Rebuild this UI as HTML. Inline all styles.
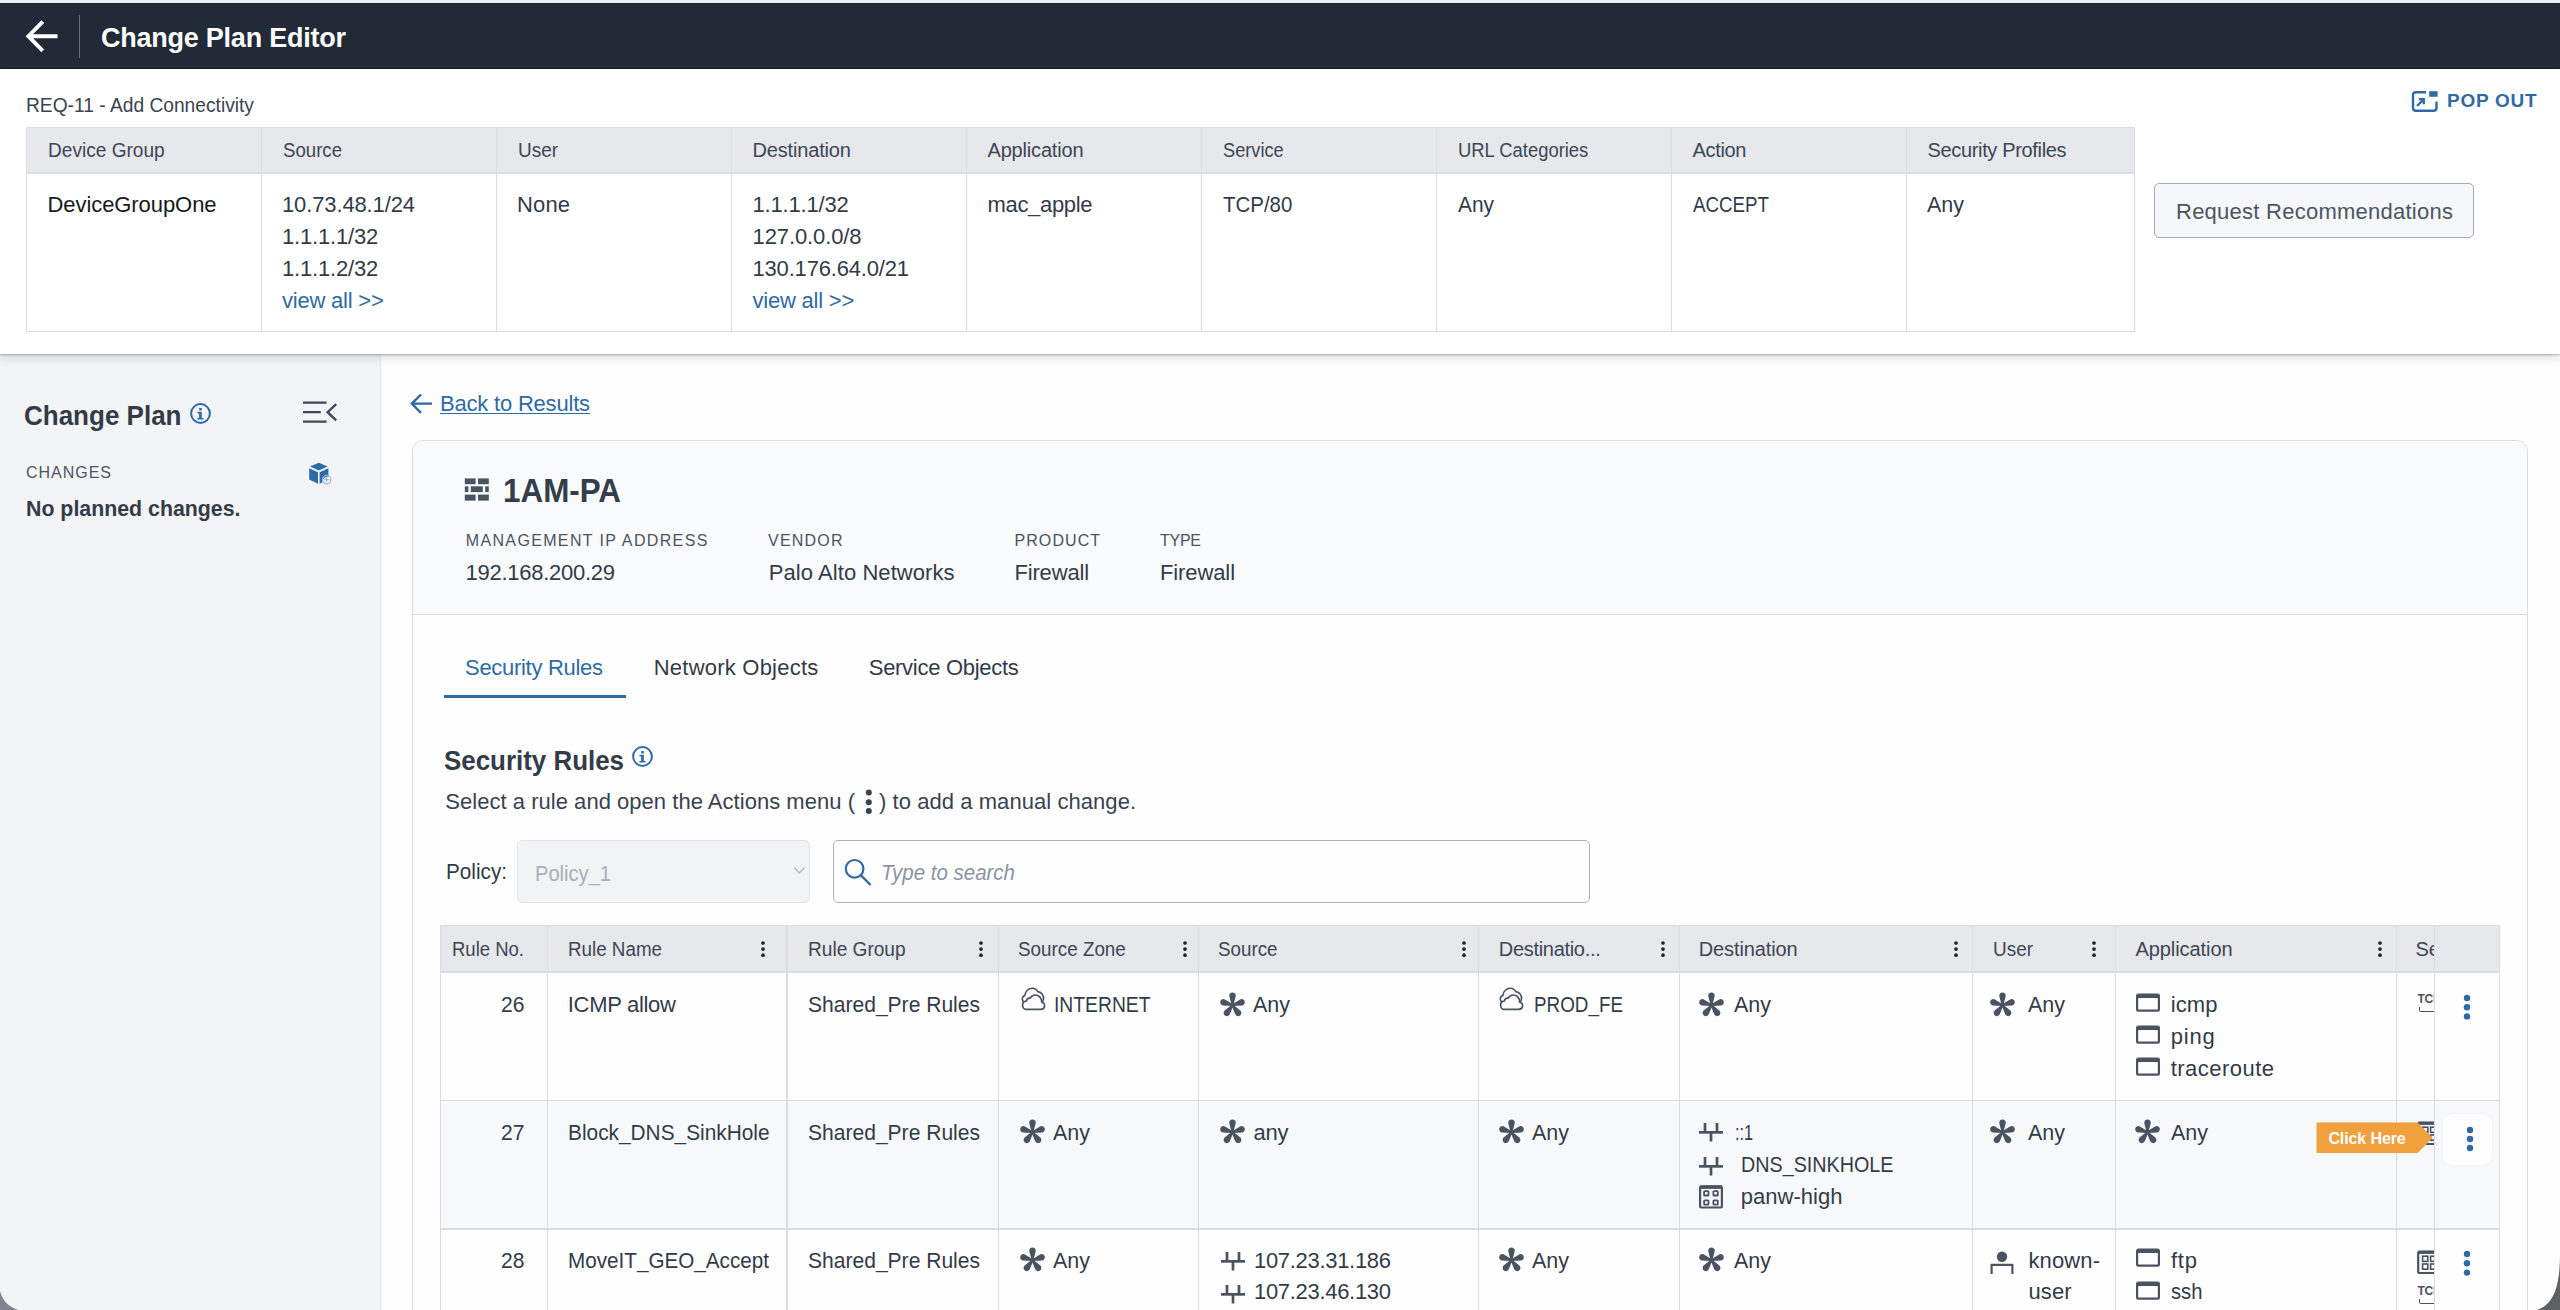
<!DOCTYPE html>
<html><head><meta charset="utf-8"><title>Change Plan Editor</title>
<style>
html,body{margin:0;padding:0;}
body{width:2560px;height:1310px;position:relative;overflow:hidden;background:#fefefe;font-family:"Liberation Sans", sans-serif;}
.t{position:absolute;white-space:nowrap;font-family:"Liberation Sans", sans-serif;}
svg{overflow:visible;}
</style></head><body>
<div style="position:absolute;left:0px;top:0px;width:2560px;height:3px;background:#eef1f6;"></div>
<div style="position:absolute;left:0px;top:3px;width:2560px;height:66px;background:#222937;"></div>
<div style="position:absolute;left:0px;top:3px;width:2560px;height:1px;background:#1b2230;"></div>
<div style="position:absolute;left:0px;top:68px;width:2560px;height:1px;background:#161c26;"></div>
<svg style="position:absolute;left:25px;top:18.5px;" width="36" height="36" viewBox="0 0 36 36"><path d="M17.8 2.6 L3.4 17.2 L17.8 31.8 M3.4 17.2 H32.5" fill="none" stroke="#fff" stroke-width="3.9" stroke-linecap="butt" stroke-linejoin="miter"/></svg>
<div style="position:absolute;left:78.5px;top:14.5px;width:1.5px;height:43px;background:#6a707c;"></div>
<div style="position:absolute;left:0px;top:69px;width:2560px;height:285px;background:#ffffff;box-shadow:0 1px 2px rgba(40,48,60,0.30), 0 4px 9px rgba(40,48,60,0.16);z-index:0;"></div>
<svg style="position:absolute;left:2411px;top:90px;" width="28" height="23" viewBox="0 0 28 23"><path d="M15 2.2 H5 Q2 2.2 2 5.2 V17.8 Q2 20.8 5 20.8 H22.5 Q25.5 20.8 25.5 17.8 V11.5" fill="none" stroke="#2e6aa5" stroke-width="2.4"/>
<rect x="18.2" y="1.2" width="8.4" height="5.6" fill="#2e6aa5"/>
<path d="M6 16 L12.6 9.4 M7.8 9.2 H12.8 V14.2" fill="none" stroke="#2e6aa5" stroke-width="2.3"/></svg>
<div style="position:absolute;left:26px;top:127px;width:2109px;height:46px;background:#e6e8ec;"></div>
<div style="position:absolute;left:26px;top:127px;width:2109px;height:205px;border:1px solid #d9dce2;box-sizing:border-box;"></div>
<div style="position:absolute;left:26px;top:172px;width:2109px;height:1.5px;background:#d9dce2;"></div>
<div style="position:absolute;left:261px;top:127px;width:1px;height:205px;background:#d9dce2;"></div>
<div style="position:absolute;left:496px;top:127px;width:1px;height:205px;background:#d9dce2;"></div>
<div style="position:absolute;left:731px;top:127px;width:1px;height:205px;background:#d9dce2;"></div>
<div style="position:absolute;left:966px;top:127px;width:1px;height:205px;background:#d9dce2;"></div>
<div style="position:absolute;left:1201px;top:127px;width:1px;height:205px;background:#d9dce2;"></div>
<div style="position:absolute;left:1436px;top:127px;width:1px;height:205px;background:#d9dce2;"></div>
<div style="position:absolute;left:1671px;top:127px;width:1px;height:205px;background:#d9dce2;"></div>
<div style="position:absolute;left:1906px;top:127px;width:1px;height:205px;background:#d9dce2;"></div>
<div style="position:absolute;left:2154px;top:183px;width:320px;height:55px;background:#f6f7f9;border:1.5px solid #a3abb7;border-radius:5px;box-sizing:border-box;"></div>
<div style="position:absolute;left:0px;top:352px;width:380px;height:958px;background:#f3f4f6;z-index:-1;"></div>
<div style="position:absolute;left:379.5px;top:352px;width:1px;height:958px;background:#e5e7eb;z-index:-1;"></div>
<svg style="position:absolute;left:190px;top:403px;" width="21" height="21" viewBox="0 0 21 21"><circle cx="10.5" cy="10.5" r="9.4" fill="none" stroke="#2e6aa5" stroke-width="2"/>
<rect x="9.2" y="5.04" width="2.6" height="2.4" fill="#2e6aa5"/>
<path d="M7.5 8.82 H11.8 V14.91 H13.5 V16.59 H7.3 V14.91 H9.1 V10.5 H7.5 Z" fill="#2e6aa5"/></svg>
<svg style="position:absolute;left:302px;top:400px;" width="36" height="24" viewBox="0 0 36 24"><path d="M1 2.6 H24.6 M1 12.2 H18.8 M1 21.7 H24.6" stroke="#3f4856" stroke-width="2.2" fill="none"/>
<path d="M34.2 4.2 L25.6 12.2 L34.2 20.4" stroke="#3f4856" stroke-width="2.4" fill="none"/></svg>
<svg style="position:absolute;left:308px;top:462px;" width="24" height="24" viewBox="0 0 24 24"><path d="M10.8 0.8 L19.6 4.6 L10.8 8.6 L2 4.6 Z" fill="#2e6aa5"/>
<path d="M1.2 6.2 L10 10.2 V21.8 L1.2 17.6 Z" fill="#2e6aa5"/>
<path d="M11.6 10.2 L20.4 6.2 V14.5 A6 6 0 0 0 14.2 20.6 L11.6 21.8 Z" fill="#2e6aa5"/>
<circle cx="18.6" cy="17.6" r="4.2" fill="none" stroke="#8fb3d6" stroke-width="1.2"/>
<path d="M18.6 15.4 V19.8 M16.4 17.6 H20.8" stroke="#8fb3d6" stroke-width="1"/></svg>
<svg style="position:absolute;left:410px;top:393px;" width="24" height="22" viewBox="0 0 24 22"><path d="M11 1.5 L1.8 10.6 L11 19.8 M1.8 10.6 H22" fill="none" stroke="#2e6aa5" stroke-width="2.4"/></svg>
<div style="position:absolute;left:440px;top:412.5px;width:150px;height:1.6px;background:#2e6aa5;"></div>
<div style="position:absolute;left:411.5px;top:440px;width:2116.5px;height:900px;border:1.5px solid #d9dde3;border-radius:11px;background:#fefefe;box-sizing:border-box;"></div>
<div style="position:absolute;left:413px;top:441.5px;width:2113.5px;height:172.5px;background:#f9fafb;border-radius:10px 10px 0 0;"></div>
<div style="position:absolute;left:413px;top:613.5px;width:2113.5px;height:1.5px;background:#d9dde3;"></div>
<svg style="position:absolute;left:464px;top:478px;" width="26" height="24" viewBox="0 0 26 24"><g fill="#4a5361">
<rect x="0.8" y="0.4" width="10.8" height="5.8"/><rect x="14" y="0.4" width="10.8" height="5.8"/>
<rect x="0.8" y="8.3" width="3.6" height="5.8"/><rect x="6.8" y="8.3" width="12" height="5.8"/><rect x="21.2" y="8.3" width="3.6" height="5.8"/>
<rect x="0.8" y="16.6" width="10.8" height="6"/><rect x="14" y="16.6" width="10.8" height="6"/></g></svg>
<div style="position:absolute;left:443.5px;top:694.5px;width:182.5px;height:3.2px;background:#2e6aa5;"></div>
<svg style="position:absolute;left:632px;top:745.5px;" width="21" height="21" viewBox="0 0 21 21"><circle cx="10.5" cy="10.5" r="9.4" fill="none" stroke="#2e6aa5" stroke-width="2"/>
<rect x="9.2" y="5.04" width="2.6" height="2.4" fill="#2e6aa5"/>
<path d="M7.5 8.82 H11.8 V14.91 H13.5 V16.59 H7.3 V14.91 H9.1 V10.5 H7.5 Z" fill="#2e6aa5"/></svg>
<svg style="position:absolute;left:862px;top:787px;" width="14" height="28" viewBox="0 0 14 28"><circle cx="6.8" cy="5.6" r="3" fill="#394250"/><circle cx="6.8" cy="15.3" r="3" fill="#394250"/><circle cx="6.8" cy="23.9" r="3" fill="#394250"/></svg>
<div style="position:absolute;left:517px;top:840px;width:293px;height:63px;background:#f2f3f5;border:1px solid #e2e5e9;border-radius:5px;box-sizing:border-box;"></div>
<svg style="position:absolute;left:793px;top:866px;" width="13" height="9" viewBox="0 0 13 9"><path d="M1.2 1.6 L6.4 7 L11.6 1.6" fill="none" stroke="#b3b9c2" stroke-width="1.4"/></svg>
<div style="position:absolute;left:832.5px;top:839.5px;width:757.5px;height:63.5px;background:#fefefe;border:1.6px solid #a9b3c0;border-radius:5px;box-sizing:border-box;"></div>
<svg style="position:absolute;left:843px;top:857px;" width="30" height="30" viewBox="0 0 30 30"><circle cx="11.6" cy="11.8" r="8.8" fill="none" stroke="#2e6aa5" stroke-width="2.2"/><path d="M18 18.4 L27.6 28" stroke="#2e6aa5" stroke-width="2.3"/></svg>
<div style="position:absolute;left:440px;top:925px;width:2059.5px;height:47px;background:#e6e8ec;"></div>
<div style="position:absolute;left:440px;top:1100px;width:2059.5px;height:128.5px;background:#f7f8fa;"></div>
<div style="position:absolute;left:440px;top:925px;width:1px;height:400px;background:#d9dce2;"></div>
<div style="position:absolute;left:2498.5px;top:925px;width:1px;height:400px;background:#d9dce2;"></div>
<div style="position:absolute;left:440px;top:925px;width:2059.5px;height:1px;background:#d9dce2;"></div>
<div style="position:absolute;left:440px;top:971px;width:2059.5px;height:1.5px;background:#d9dce2;"></div>
<div style="position:absolute;left:440px;top:1099.5px;width:2059.5px;height:1.5px;background:#d9dce2;"></div>
<div style="position:absolute;left:440px;top:1228px;width:2059.5px;height:1.5px;background:#d9dce2;"></div>
<div style="position:absolute;left:547px;top:925px;width:1px;height:400px;background:#d9dce2;"></div>
<div style="position:absolute;left:786px;top:925px;width:2px;height:400px;background:#d9dce2;"></div>
<div style="position:absolute;left:997.5px;top:925px;width:1px;height:400px;background:#d9dce2;"></div>
<div style="position:absolute;left:1197.5px;top:925px;width:1px;height:400px;background:#d9dce2;"></div>
<div style="position:absolute;left:1477.5px;top:925px;width:1px;height:400px;background:#d9dce2;"></div>
<div style="position:absolute;left:1678.5px;top:925px;width:1px;height:400px;background:#d9dce2;"></div>
<div style="position:absolute;left:1972px;top:925px;width:1px;height:400px;background:#d9dce2;"></div>
<div style="position:absolute;left:2115px;top:925px;width:1px;height:400px;background:#d9dce2;"></div>
<div style="position:absolute;left:2395.5px;top:925px;width:1px;height:400px;background:#d9dce2;"></div>
<div style="position:absolute;left:2434px;top:925px;width:1px;height:400px;background:#d9dce2;"></div>
<svg style="position:absolute;left:756.8px;top:936.6999999999999px;" width="12" height="24.2" viewBox="0 0 12 24.2"><circle cx="6" cy="6.0" r="1.85" fill="#1f242c"/><circle cx="6" cy="12.1" r="1.85" fill="#1f242c"/><circle cx="6" cy="18.2" r="1.85" fill="#1f242c"/></svg>
<svg style="position:absolute;left:975px;top:936.6999999999999px;" width="12" height="24.2" viewBox="0 0 12 24.2"><circle cx="6" cy="6.0" r="1.85" fill="#1f242c"/><circle cx="6" cy="12.1" r="1.85" fill="#1f242c"/><circle cx="6" cy="18.2" r="1.85" fill="#1f242c"/></svg>
<svg style="position:absolute;left:1179px;top:936.6999999999999px;" width="12" height="24.2" viewBox="0 0 12 24.2"><circle cx="6" cy="6.0" r="1.85" fill="#1f242c"/><circle cx="6" cy="12.1" r="1.85" fill="#1f242c"/><circle cx="6" cy="18.2" r="1.85" fill="#1f242c"/></svg>
<svg style="position:absolute;left:1457.75px;top:936.6999999999999px;" width="12" height="24.2" viewBox="0 0 12 24.2"><circle cx="6" cy="6.0" r="1.85" fill="#1f242c"/><circle cx="6" cy="12.1" r="1.85" fill="#1f242c"/><circle cx="6" cy="18.2" r="1.85" fill="#1f242c"/></svg>
<svg style="position:absolute;left:1656.8px;top:936.6999999999999px;" width="12" height="24.2" viewBox="0 0 12 24.2"><circle cx="6" cy="6.0" r="1.85" fill="#1f242c"/><circle cx="6" cy="12.1" r="1.85" fill="#1f242c"/><circle cx="6" cy="18.2" r="1.85" fill="#1f242c"/></svg>
<svg style="position:absolute;left:1949.5px;top:936.6999999999999px;" width="12" height="24.2" viewBox="0 0 12 24.2"><circle cx="6" cy="6.0" r="1.85" fill="#1f242c"/><circle cx="6" cy="12.1" r="1.85" fill="#1f242c"/><circle cx="6" cy="18.2" r="1.85" fill="#1f242c"/></svg>
<svg style="position:absolute;left:2088px;top:936.6999999999999px;" width="12" height="24.2" viewBox="0 0 12 24.2"><circle cx="6" cy="6.0" r="1.85" fill="#1f242c"/><circle cx="6" cy="12.1" r="1.85" fill="#1f242c"/><circle cx="6" cy="18.2" r="1.85" fill="#1f242c"/></svg>
<svg style="position:absolute;left:2374px;top:936.6999999999999px;" width="12" height="24.2" viewBox="0 0 12 24.2"><circle cx="6" cy="6.0" r="1.85" fill="#1f242c"/><circle cx="6" cy="12.1" r="1.85" fill="#1f242c"/><circle cx="6" cy="18.2" r="1.85" fill="#1f242c"/></svg>
<svg style="position:absolute;left:1020.5px;top:987.2px;" width="26" height="25" viewBox="0 0 26 25"><g fill="none" stroke="#4a5361" stroke-width="1.65" stroke-linejoin="round" stroke-linecap="round">
<path d="M2.3 14.6 C0.4 12.6 1.2 9.2 3.9 8.4 C4.2 4.2 7.6 1.2 11.2 1.2 C13.8 1.2 15.8 2.6 16.9 4.6 C20.6 5.2 23.2 8.6 22.4 12.6 C22.2 13.2 22 13.8 21.6 14.3"/>
<path d="M4.4 22.3 H19.8 C24.4 22.3 25 16.2 20.6 15.1 C20.8 10.6 17.6 8 14.4 8 C11.8 8 10 9.4 9.2 11.2 C7.4 11 5.8 12.2 5.4 14 C2.2 14.4 1.4 16.8 1.6 18.6 C1.8 20.6 3.2 22.3 4.4 22.3 Z"/></g></svg>
<svg style="position:absolute;left:1020px;top:1119px;" width="25" height="25" viewBox="0 0 25 25"><path transform="rotate(0 12.5 13.2)" d="M11.6 13.2 L9.3 4.2 A3.25 3.25 0 1 1 15.7 4.2 L13.4 13.2 Z" fill="#4a5361"/><path transform="rotate(72 12.5 13.2)" d="M11.6 13.2 L9.3 4.2 A3.25 3.25 0 1 1 15.7 4.2 L13.4 13.2 Z" fill="#4a5361"/><path transform="rotate(144 12.5 13.2)" d="M11.6 13.2 L9.3 4.2 A3.25 3.25 0 1 1 15.7 4.2 L13.4 13.2 Z" fill="#4a5361"/><path transform="rotate(216 12.5 13.2)" d="M11.6 13.2 L9.3 4.2 A3.25 3.25 0 1 1 15.7 4.2 L13.4 13.2 Z" fill="#4a5361"/><path transform="rotate(288 12.5 13.2)" d="M11.6 13.2 L9.3 4.2 A3.25 3.25 0 1 1 15.7 4.2 L13.4 13.2 Z" fill="#4a5361"/><circle cx="12.5" cy="13.2" r="2.2" fill="#4a5361"/></svg>
<svg style="position:absolute;left:1020px;top:1247px;" width="25" height="25" viewBox="0 0 25 25"><path transform="rotate(0 12.5 13.2)" d="M11.6 13.2 L9.3 4.2 A3.25 3.25 0 1 1 15.7 4.2 L13.4 13.2 Z" fill="#4a5361"/><path transform="rotate(72 12.5 13.2)" d="M11.6 13.2 L9.3 4.2 A3.25 3.25 0 1 1 15.7 4.2 L13.4 13.2 Z" fill="#4a5361"/><path transform="rotate(144 12.5 13.2)" d="M11.6 13.2 L9.3 4.2 A3.25 3.25 0 1 1 15.7 4.2 L13.4 13.2 Z" fill="#4a5361"/><path transform="rotate(216 12.5 13.2)" d="M11.6 13.2 L9.3 4.2 A3.25 3.25 0 1 1 15.7 4.2 L13.4 13.2 Z" fill="#4a5361"/><path transform="rotate(288 12.5 13.2)" d="M11.6 13.2 L9.3 4.2 A3.25 3.25 0 1 1 15.7 4.2 L13.4 13.2 Z" fill="#4a5361"/><circle cx="12.5" cy="13.2" r="2.2" fill="#4a5361"/></svg>
<svg style="position:absolute;left:1220px;top:991.5px;" width="25" height="25" viewBox="0 0 25 25"><path transform="rotate(0 12.5 13.2)" d="M11.6 13.2 L9.3 4.2 A3.25 3.25 0 1 1 15.7 4.2 L13.4 13.2 Z" fill="#4a5361"/><path transform="rotate(72 12.5 13.2)" d="M11.6 13.2 L9.3 4.2 A3.25 3.25 0 1 1 15.7 4.2 L13.4 13.2 Z" fill="#4a5361"/><path transform="rotate(144 12.5 13.2)" d="M11.6 13.2 L9.3 4.2 A3.25 3.25 0 1 1 15.7 4.2 L13.4 13.2 Z" fill="#4a5361"/><path transform="rotate(216 12.5 13.2)" d="M11.6 13.2 L9.3 4.2 A3.25 3.25 0 1 1 15.7 4.2 L13.4 13.2 Z" fill="#4a5361"/><path transform="rotate(288 12.5 13.2)" d="M11.6 13.2 L9.3 4.2 A3.25 3.25 0 1 1 15.7 4.2 L13.4 13.2 Z" fill="#4a5361"/><circle cx="12.5" cy="13.2" r="2.2" fill="#4a5361"/></svg>
<svg style="position:absolute;left:1220px;top:1119px;" width="25" height="25" viewBox="0 0 25 25"><path transform="rotate(0 12.5 13.2)" d="M11.6 13.2 L9.3 4.2 A3.25 3.25 0 1 1 15.7 4.2 L13.4 13.2 Z" fill="#4a5361"/><path transform="rotate(72 12.5 13.2)" d="M11.6 13.2 L9.3 4.2 A3.25 3.25 0 1 1 15.7 4.2 L13.4 13.2 Z" fill="#4a5361"/><path transform="rotate(144 12.5 13.2)" d="M11.6 13.2 L9.3 4.2 A3.25 3.25 0 1 1 15.7 4.2 L13.4 13.2 Z" fill="#4a5361"/><path transform="rotate(216 12.5 13.2)" d="M11.6 13.2 L9.3 4.2 A3.25 3.25 0 1 1 15.7 4.2 L13.4 13.2 Z" fill="#4a5361"/><path transform="rotate(288 12.5 13.2)" d="M11.6 13.2 L9.3 4.2 A3.25 3.25 0 1 1 15.7 4.2 L13.4 13.2 Z" fill="#4a5361"/><circle cx="12.5" cy="13.2" r="2.2" fill="#4a5361"/></svg>
<svg style="position:absolute;left:1220.8px;top:1251.6px;" width="24" height="19" viewBox="0 0 24 19"><g fill="#4a5361"><rect x="0" y="8" width="24" height="2.7"/><rect x="4.65" y="0" width="2.7" height="9"/><rect x="16.65" y="0" width="2.7" height="9"/><rect x="10.65" y="9" width="2.7" height="9.5"/></g></svg>
<svg style="position:absolute;left:1220.8px;top:1285px;" width="24" height="19" viewBox="0 0 24 19"><g fill="#4a5361"><rect x="0" y="8" width="24" height="2.7"/><rect x="4.65" y="0" width="2.7" height="9"/><rect x="16.65" y="0" width="2.7" height="9"/><rect x="10.65" y="9" width="2.7" height="9.5"/></g></svg>
<svg style="position:absolute;left:1499px;top:987.2px;" width="26" height="25" viewBox="0 0 26 25"><g fill="none" stroke="#4a5361" stroke-width="1.65" stroke-linejoin="round" stroke-linecap="round">
<path d="M2.3 14.6 C0.4 12.6 1.2 9.2 3.9 8.4 C4.2 4.2 7.6 1.2 11.2 1.2 C13.8 1.2 15.8 2.6 16.9 4.6 C20.6 5.2 23.2 8.6 22.4 12.6 C22.2 13.2 22 13.8 21.6 14.3"/>
<path d="M4.4 22.3 H19.8 C24.4 22.3 25 16.2 20.6 15.1 C20.8 10.6 17.6 8 14.4 8 C11.8 8 10 9.4 9.2 11.2 C7.4 11 5.8 12.2 5.4 14 C2.2 14.4 1.4 16.8 1.6 18.6 C1.8 20.6 3.2 22.3 4.4 22.3 Z"/></g></svg>
<svg style="position:absolute;left:1499px;top:1119px;" width="25" height="25" viewBox="0 0 25 25"><path transform="rotate(0 12.5 13.2)" d="M11.6 13.2 L9.3 4.2 A3.25 3.25 0 1 1 15.7 4.2 L13.4 13.2 Z" fill="#4a5361"/><path transform="rotate(72 12.5 13.2)" d="M11.6 13.2 L9.3 4.2 A3.25 3.25 0 1 1 15.7 4.2 L13.4 13.2 Z" fill="#4a5361"/><path transform="rotate(144 12.5 13.2)" d="M11.6 13.2 L9.3 4.2 A3.25 3.25 0 1 1 15.7 4.2 L13.4 13.2 Z" fill="#4a5361"/><path transform="rotate(216 12.5 13.2)" d="M11.6 13.2 L9.3 4.2 A3.25 3.25 0 1 1 15.7 4.2 L13.4 13.2 Z" fill="#4a5361"/><path transform="rotate(288 12.5 13.2)" d="M11.6 13.2 L9.3 4.2 A3.25 3.25 0 1 1 15.7 4.2 L13.4 13.2 Z" fill="#4a5361"/><circle cx="12.5" cy="13.2" r="2.2" fill="#4a5361"/></svg>
<svg style="position:absolute;left:1499px;top:1247px;" width="25" height="25" viewBox="0 0 25 25"><path transform="rotate(0 12.5 13.2)" d="M11.6 13.2 L9.3 4.2 A3.25 3.25 0 1 1 15.7 4.2 L13.4 13.2 Z" fill="#4a5361"/><path transform="rotate(72 12.5 13.2)" d="M11.6 13.2 L9.3 4.2 A3.25 3.25 0 1 1 15.7 4.2 L13.4 13.2 Z" fill="#4a5361"/><path transform="rotate(144 12.5 13.2)" d="M11.6 13.2 L9.3 4.2 A3.25 3.25 0 1 1 15.7 4.2 L13.4 13.2 Z" fill="#4a5361"/><path transform="rotate(216 12.5 13.2)" d="M11.6 13.2 L9.3 4.2 A3.25 3.25 0 1 1 15.7 4.2 L13.4 13.2 Z" fill="#4a5361"/><path transform="rotate(288 12.5 13.2)" d="M11.6 13.2 L9.3 4.2 A3.25 3.25 0 1 1 15.7 4.2 L13.4 13.2 Z" fill="#4a5361"/><circle cx="12.5" cy="13.2" r="2.2" fill="#4a5361"/></svg>
<svg style="position:absolute;left:1698.5px;top:991.5px;" width="25" height="25" viewBox="0 0 25 25"><path transform="rotate(0 12.5 13.2)" d="M11.6 13.2 L9.3 4.2 A3.25 3.25 0 1 1 15.7 4.2 L13.4 13.2 Z" fill="#4a5361"/><path transform="rotate(72 12.5 13.2)" d="M11.6 13.2 L9.3 4.2 A3.25 3.25 0 1 1 15.7 4.2 L13.4 13.2 Z" fill="#4a5361"/><path transform="rotate(144 12.5 13.2)" d="M11.6 13.2 L9.3 4.2 A3.25 3.25 0 1 1 15.7 4.2 L13.4 13.2 Z" fill="#4a5361"/><path transform="rotate(216 12.5 13.2)" d="M11.6 13.2 L9.3 4.2 A3.25 3.25 0 1 1 15.7 4.2 L13.4 13.2 Z" fill="#4a5361"/><path transform="rotate(288 12.5 13.2)" d="M11.6 13.2 L9.3 4.2 A3.25 3.25 0 1 1 15.7 4.2 L13.4 13.2 Z" fill="#4a5361"/><circle cx="12.5" cy="13.2" r="2.2" fill="#4a5361"/></svg>
<svg style="position:absolute;left:1699px;top:1122.5px;" width="24" height="19" viewBox="0 0 24 19"><g fill="#4a5361"><rect x="0" y="8" width="24" height="2.7"/><rect x="4.65" y="0" width="2.7" height="9"/><rect x="16.65" y="0" width="2.7" height="9"/><rect x="10.65" y="9" width="2.7" height="9.5"/></g></svg>
<svg style="position:absolute;left:1699px;top:1157.2px;" width="24" height="19" viewBox="0 0 24 19"><g fill="#4a5361"><rect x="0" y="8" width="24" height="2.7"/><rect x="4.65" y="0" width="2.7" height="9"/><rect x="16.65" y="0" width="2.7" height="9"/><rect x="10.65" y="9" width="2.7" height="9.5"/></g></svg>
<svg style="position:absolute;left:1699px;top:1185px;" width="24" height="24" viewBox="0 0 24 24"><g fill="none" stroke="#4a5361"><rect x="1.1" y="1.3" width="21.8" height="21.2" rx="1.4" stroke-width="2.2"/>
<path d="M1.1 2.2 H22.9" stroke-width="3.4"/>
<rect x="5.1" y="6.2" width="4.4" height="4.3" stroke-width="1.8" rx="0.6"/><rect x="14.4" y="6.2" width="4.4" height="4.3" stroke-width="1.8" rx="0.6"/>
<rect x="5.1" y="15.4" width="4.4" height="4.3" stroke-width="1.8" rx="0.6"/><rect x="14.4" y="15.4" width="4.4" height="4.3" stroke-width="1.8" rx="0.6"/></g></svg>
<svg style="position:absolute;left:1698.5px;top:1247px;" width="25" height="25" viewBox="0 0 25 25"><path transform="rotate(0 12.5 13.2)" d="M11.6 13.2 L9.3 4.2 A3.25 3.25 0 1 1 15.7 4.2 L13.4 13.2 Z" fill="#4a5361"/><path transform="rotate(72 12.5 13.2)" d="M11.6 13.2 L9.3 4.2 A3.25 3.25 0 1 1 15.7 4.2 L13.4 13.2 Z" fill="#4a5361"/><path transform="rotate(144 12.5 13.2)" d="M11.6 13.2 L9.3 4.2 A3.25 3.25 0 1 1 15.7 4.2 L13.4 13.2 Z" fill="#4a5361"/><path transform="rotate(216 12.5 13.2)" d="M11.6 13.2 L9.3 4.2 A3.25 3.25 0 1 1 15.7 4.2 L13.4 13.2 Z" fill="#4a5361"/><path transform="rotate(288 12.5 13.2)" d="M11.6 13.2 L9.3 4.2 A3.25 3.25 0 1 1 15.7 4.2 L13.4 13.2 Z" fill="#4a5361"/><circle cx="12.5" cy="13.2" r="2.2" fill="#4a5361"/></svg>
<svg style="position:absolute;left:1990px;top:991.5px;" width="25" height="25" viewBox="0 0 25 25"><path transform="rotate(0 12.5 13.2)" d="M11.6 13.2 L9.3 4.2 A3.25 3.25 0 1 1 15.7 4.2 L13.4 13.2 Z" fill="#4a5361"/><path transform="rotate(72 12.5 13.2)" d="M11.6 13.2 L9.3 4.2 A3.25 3.25 0 1 1 15.7 4.2 L13.4 13.2 Z" fill="#4a5361"/><path transform="rotate(144 12.5 13.2)" d="M11.6 13.2 L9.3 4.2 A3.25 3.25 0 1 1 15.7 4.2 L13.4 13.2 Z" fill="#4a5361"/><path transform="rotate(216 12.5 13.2)" d="M11.6 13.2 L9.3 4.2 A3.25 3.25 0 1 1 15.7 4.2 L13.4 13.2 Z" fill="#4a5361"/><path transform="rotate(288 12.5 13.2)" d="M11.6 13.2 L9.3 4.2 A3.25 3.25 0 1 1 15.7 4.2 L13.4 13.2 Z" fill="#4a5361"/><circle cx="12.5" cy="13.2" r="2.2" fill="#4a5361"/></svg>
<svg style="position:absolute;left:1990px;top:1119px;" width="25" height="25" viewBox="0 0 25 25"><path transform="rotate(0 12.5 13.2)" d="M11.6 13.2 L9.3 4.2 A3.25 3.25 0 1 1 15.7 4.2 L13.4 13.2 Z" fill="#4a5361"/><path transform="rotate(72 12.5 13.2)" d="M11.6 13.2 L9.3 4.2 A3.25 3.25 0 1 1 15.7 4.2 L13.4 13.2 Z" fill="#4a5361"/><path transform="rotate(144 12.5 13.2)" d="M11.6 13.2 L9.3 4.2 A3.25 3.25 0 1 1 15.7 4.2 L13.4 13.2 Z" fill="#4a5361"/><path transform="rotate(216 12.5 13.2)" d="M11.6 13.2 L9.3 4.2 A3.25 3.25 0 1 1 15.7 4.2 L13.4 13.2 Z" fill="#4a5361"/><path transform="rotate(288 12.5 13.2)" d="M11.6 13.2 L9.3 4.2 A3.25 3.25 0 1 1 15.7 4.2 L13.4 13.2 Z" fill="#4a5361"/><circle cx="12.5" cy="13.2" r="2.2" fill="#4a5361"/></svg>
<svg style="position:absolute;left:1989.5px;top:1250.5px;" width="25" height="24" viewBox="0 0 25 24"><circle cx="12" cy="5.8" r="5.2" fill="#4a5361"/><path d="M1.6 23 V13.8 H22.4 V23" fill="none" stroke="#4a5361" stroke-width="2.2" stroke-linejoin="round"/></svg>
<svg style="position:absolute;left:2135.5px;top:992.5px;" width="24" height="19" viewBox="0 0 24 19"><g fill="none" stroke="#4a5361"><rect x="1.1" y="1.6" width="21.8" height="16" rx="1.4" stroke-width="2.2"/><path d="M1.1 3.2 H22.9" stroke-width="3.6"/></g></svg>
<svg style="position:absolute;left:2135.5px;top:1024.5px;" width="24" height="19" viewBox="0 0 24 19"><g fill="none" stroke="#4a5361"><rect x="1.1" y="1.6" width="21.8" height="16" rx="1.4" stroke-width="2.2"/><path d="M1.1 3.2 H22.9" stroke-width="3.6"/></g></svg>
<svg style="position:absolute;left:2135.5px;top:1056.5px;" width="24" height="19" viewBox="0 0 24 19"><g fill="none" stroke="#4a5361"><rect x="1.1" y="1.6" width="21.8" height="16" rx="1.4" stroke-width="2.2"/><path d="M1.1 3.2 H22.9" stroke-width="3.6"/></g></svg>
<svg style="position:absolute;left:2135px;top:1119px;" width="25" height="25" viewBox="0 0 25 25"><path transform="rotate(0 12.5 13.2)" d="M11.6 13.2 L9.3 4.2 A3.25 3.25 0 1 1 15.7 4.2 L13.4 13.2 Z" fill="#4a5361"/><path transform="rotate(72 12.5 13.2)" d="M11.6 13.2 L9.3 4.2 A3.25 3.25 0 1 1 15.7 4.2 L13.4 13.2 Z" fill="#4a5361"/><path transform="rotate(144 12.5 13.2)" d="M11.6 13.2 L9.3 4.2 A3.25 3.25 0 1 1 15.7 4.2 L13.4 13.2 Z" fill="#4a5361"/><path transform="rotate(216 12.5 13.2)" d="M11.6 13.2 L9.3 4.2 A3.25 3.25 0 1 1 15.7 4.2 L13.4 13.2 Z" fill="#4a5361"/><path transform="rotate(288 12.5 13.2)" d="M11.6 13.2 L9.3 4.2 A3.25 3.25 0 1 1 15.7 4.2 L13.4 13.2 Z" fill="#4a5361"/><circle cx="12.5" cy="13.2" r="2.2" fill="#4a5361"/></svg>
<svg style="position:absolute;left:2135.5px;top:1247.5px;" width="24" height="19" viewBox="0 0 24 19"><g fill="none" stroke="#4a5361"><rect x="1.1" y="1.6" width="21.8" height="16" rx="1.4" stroke-width="2.2"/><path d="M1.1 3.2 H22.9" stroke-width="3.6"/></g></svg>
<svg style="position:absolute;left:2135.5px;top:1280.5px;" width="24" height="19" viewBox="0 0 24 19"><g fill="none" stroke="#4a5361"><rect x="1.1" y="1.6" width="21.8" height="16" rx="1.4" stroke-width="2.2"/><path d="M1.1 3.2 H22.9" stroke-width="3.6"/></g></svg>
<div style="position:absolute;left:2528px;top:352px;width:32px;height:958px;background:#fefefe;z-index:-1;"></div>
<div class="t" style="left:101px;top:25px;font-size:27px;line-height:27px;color:#ffffff;font-weight:700;letter-spacing:-0.24px;">Change Plan Editor</div>
<div class="t" style="left:26px;top:95px;font-size:20px;line-height:20px;color:#3a4351;transform:scaleX(0.9597);transform-origin:0 0;">REQ-11 - Add Connectivity</div>
<div class="t" style="left:2447px;top:91px;font-size:19px;line-height:19px;color:#2e6aa5;font-weight:700;letter-spacing:0.75px;">POP OUT</div>
<div class="t" style="left:47.5px;top:140px;font-size:20px;line-height:20px;color:#3d4654;transform:scaleX(0.9544);transform-origin:0 0;">Device Group</div>
<div class="t" style="left:282.5px;top:140px;font-size:20px;line-height:20px;color:#3d4654;transform:scaleX(0.9311);transform-origin:0 0;">Source</div>
<div class="t" style="left:517.5px;top:140px;font-size:20px;line-height:20px;color:#3d4654;transform:scaleX(0.9473);transform-origin:0 0;">User</div>
<div class="t" style="left:752.5px;top:140px;font-size:20px;line-height:20px;color:#3d4654;letter-spacing:-0.16px;">Destination</div>
<div class="t" style="left:987.5px;top:140px;font-size:20px;line-height:20px;color:#3d4654;letter-spacing:-0.18px;">Application</div>
<div class="t" style="left:1222.5px;top:140px;font-size:20px;line-height:20px;color:#3d4654;transform:scaleX(0.9102);transform-origin:0 0;">Service</div>
<div class="t" style="left:1457.5px;top:140px;font-size:20px;line-height:20px;color:#3d4654;transform:scaleX(0.9207);transform-origin:0 0;">URL Categories</div>
<div class="t" style="left:1692.5px;top:140px;font-size:20px;line-height:20px;color:#3d4654;letter-spacing:-0.32px;">Action</div>
<div class="t" style="left:1927.5px;top:140px;font-size:20px;line-height:20px;color:#3d4654;letter-spacing:-0.34px;">Security Profiles</div>
<div class="t" style="left:47.5px;top:194px;font-size:22px;line-height:22px;color:#161a20;letter-spacing:-0.07px;">DeviceGroupOne</div>
<div class="t" style="left:282px;top:194px;font-size:22px;line-height:22px;color:#323b49;letter-spacing:-0.13px;">10.73.48.1/24</div>
<div class="t" style="left:282px;top:226px;font-size:22px;line-height:22px;color:#323b49;letter-spacing:-0.17px;">1.1.1.1/32</div>
<div class="t" style="left:282px;top:258px;font-size:22px;line-height:22px;color:#323b49;letter-spacing:-0.17px;">1.1.1.2/32</div>
<div class="t" style="left:282px;top:290px;font-size:22px;line-height:22px;color:#2e6aa5;letter-spacing:-0.22px;">view all &gt;&gt;</div>
<div class="t" style="left:517px;top:194px;font-size:22px;line-height:22px;color:#323b49;letter-spacing:0.14px;">None</div>
<div class="t" style="left:752.5px;top:194px;font-size:22px;line-height:22px;color:#323b49;letter-spacing:-0.17px;">1.1.1.1/32</div>
<div class="t" style="left:752.5px;top:226px;font-size:22px;line-height:22px;color:#323b49;letter-spacing:-0.11px;">127.0.0.0/8</div>
<div class="t" style="left:752.5px;top:258px;font-size:22px;line-height:22px;color:#323b49;letter-spacing:-0.18px;">130.176.64.0/21</div>
<div class="t" style="left:752.5px;top:290px;font-size:22px;line-height:22px;color:#2e6aa5;letter-spacing:-0.22px;">view all &gt;&gt;</div>
<div class="t" style="left:987.5px;top:194px;font-size:22px;line-height:22px;color:#323b49;letter-spacing:-0.33px;">mac_apple</div>
<div class="t" style="left:1222.5px;top:194px;font-size:22px;line-height:22px;color:#323b49;transform:scaleX(0.9292);transform-origin:0 0;">TCP/80</div>
<div class="t" style="left:1457.5px;top:194px;font-size:22px;line-height:22px;color:#323b49;transform:scaleX(0.9496);transform-origin:0 0;">Any</div>
<div class="t" style="left:1692.5px;top:194px;font-size:22px;line-height:22px;color:#323b49;transform:scaleX(0.8517);transform-origin:0 0;">ACCEPT</div>
<div class="t" style="left:1927px;top:194px;font-size:22px;line-height:22px;color:#323b49;transform:scaleX(0.9760);transform-origin:0 0;">Any</div>
<div class="t" style="left:2176px;top:201px;font-size:22px;line-height:22px;color:#4b5563;letter-spacing:0.25px;">Request Recommendations</div>
<div class="t" style="left:24px;top:402px;font-size:28px;line-height:28px;color:#333b48;font-weight:700;transform:scaleX(0.9287);transform-origin:0 0;">Change Plan</div>
<div class="t" style="left:26px;top:465px;font-size:16px;line-height:16px;color:#4b5462;letter-spacing:0.98px;">CHANGES</div>
<div class="t" style="left:26px;top:498px;font-size:22px;line-height:22px;color:#333b48;font-weight:700;transform:scaleX(0.9695);transform-origin:0 0;">No planned changes.</div>
<div class="t" style="left:440px;top:393px;font-size:22px;line-height:22px;color:#2e6aa5;letter-spacing:-0.20px;">Back to Results</div>
<div class="t" style="left:503px;top:474px;font-size:33px;line-height:33px;color:#343d4a;font-weight:700;transform:scaleX(0.9512);transform-origin:0 0;">1AM-PA</div>
<div class="t" style="left:465.75px;top:533px;font-size:16px;line-height:16px;color:#4a5361;letter-spacing:1.35px;">MANAGEMENT IP ADDRESS</div>
<div class="t" style="left:768px;top:533px;font-size:16px;line-height:16px;color:#4a5361;letter-spacing:1.21px;">VENDOR</div>
<div class="t" style="left:1014.5px;top:533px;font-size:16px;line-height:16px;color:#4a5361;letter-spacing:1.07px;">PRODUCT</div>
<div class="t" style="left:1160px;top:533px;font-size:16px;line-height:16px;color:#4a5361;letter-spacing:-0.26px;">TYPE</div>
<div class="t" style="left:465.5px;top:562px;font-size:22px;line-height:22px;color:#323b49;letter-spacing:-0.26px;">192.168.200.29</div>
<div class="t" style="left:768.75px;top:562px;font-size:22px;line-height:22px;color:#323b49;letter-spacing:0.07px;">Palo Alto Networks</div>
<div class="t" style="left:1014.5px;top:562px;font-size:22px;line-height:22px;color:#323b49;letter-spacing:-0.18px;">Firewall</div>
<div class="t" style="left:1160px;top:562px;font-size:22px;line-height:22px;color:#323b49;letter-spacing:-0.11px;">Firewall</div>
<div class="t" style="left:465px;top:657px;font-size:22px;line-height:22px;color:#2e6aa5;letter-spacing:-0.29px;">Security Rules</div>
<div class="t" style="left:653.75px;top:657px;font-size:22px;line-height:22px;color:#323b49;letter-spacing:0.22px;">Network Objects</div>
<div class="t" style="left:868.75px;top:657px;font-size:22px;line-height:22px;color:#323b49;letter-spacing:-0.29px;">Service Objects</div>
<div class="t" style="left:443.75px;top:747px;font-size:28px;line-height:28px;color:#333b48;font-weight:700;transform:scaleX(0.9253);transform-origin:0 0;">Security Rules</div>
<div class="t" style="left:445.3px;top:791px;font-size:22px;line-height:22px;color:#394250;letter-spacing:0.03px;">Select a rule and open the Actions menu (</div>
<div class="t" style="left:879px;top:791px;font-size:22px;line-height:22px;color:#394250;letter-spacing:0.06px;">) to add a manual change.</div>
<div class="t" style="left:446px;top:861px;font-size:22px;line-height:22px;color:#323b49;transform:scaleX(0.9414);transform-origin:0 0;">Policy:</div>
<div class="t" style="left:535px;top:863px;font-size:22px;line-height:22px;color:#a8afba;transform:scaleX(0.9140);transform-origin:0 0;">Policy_1</div>
<div class="t" style="left:881px;top:862px;font-size:22px;line-height:22px;color:#8a94a3;font-style:italic;transform:scaleX(0.9313);transform-origin:0 0;">Type to search</div>
<div class="t" style="left:452px;top:939px;font-size:20px;line-height:20px;color:#3d4654;transform:scaleX(0.9253);transform-origin:0 0;">Rule No.</div>
<div class="t" style="left:567.8px;top:939px;font-size:20px;line-height:20px;color:#3d4654;transform:scaleX(0.9396);transform-origin:0 0;">Rule Name</div>
<div class="t" style="left:808.4px;top:939px;font-size:20px;line-height:20px;color:#3d4654;transform:scaleX(0.9543);transform-origin:0 0;">Rule Group</div>
<div class="t" style="left:1017.8px;top:939px;font-size:20px;line-height:20px;color:#3d4654;transform:scaleX(0.9414);transform-origin:0 0;">Source Zone</div>
<div class="t" style="left:1218px;top:939px;font-size:20px;line-height:20px;color:#3d4654;transform:scaleX(0.9389);transform-origin:0 0;">Source</div>
<div class="t" style="left:1498.75px;top:939px;font-size:20px;line-height:20px;color:#3d4654;letter-spacing:-0.30px;">Destinatio...</div>
<div class="t" style="left:1698.75px;top:939px;font-size:20px;line-height:20px;color:#3d4654;letter-spacing:-0.11px;">Destination</div>
<div class="t" style="left:1993px;top:939px;font-size:20px;line-height:20px;color:#3d4654;transform:scaleX(0.9473);transform-origin:0 0;">User</div>
<div class="t" style="left:2135.5px;top:939px;font-size:20px;line-height:20px;color:#3d4654;letter-spacing:-0.08px;">Application</div>
<div class="t" style="left:500.6px;top:993.5px;font-size:22px;line-height:22px;color:#323b49;transform:scaleX(0.9562);transform-origin:0 0;">26</div>
<div class="t" style="left:500.6px;top:1121.5px;font-size:22px;line-height:22px;color:#323b49;transform:scaleX(0.9562);transform-origin:0 0;">27</div>
<div class="t" style="left:500.6px;top:1249.5px;font-size:22px;line-height:22px;color:#323b49;transform:scaleX(0.9562);transform-origin:0 0;">28</div>
<div class="t" style="left:567.8px;top:993.5px;font-size:22px;line-height:22px;color:#323b49;letter-spacing:-0.31px;">ICMP allow</div>
<div class="t" style="left:567.8px;top:1121.5px;font-size:22px;line-height:22px;color:#323b49;transform:scaleX(0.9475);transform-origin:0 0;">Block_DNS_SinkHole</div>
<div class="t" style="left:567.8px;top:1249.5px;font-size:22px;line-height:22px;color:#323b49;transform:scaleX(0.9394);transform-origin:0 0;">MoveIT_GEO_Accept</div>
<div class="t" style="left:808.4px;top:993.5px;font-size:22px;line-height:22px;color:#323b49;transform:scaleX(0.9568);transform-origin:0 0;">Shared_Pre Rules</div>
<div class="t" style="left:808.4px;top:1121.5px;font-size:22px;line-height:22px;color:#323b49;transform:scaleX(0.9568);transform-origin:0 0;">Shared_Pre Rules</div>
<div class="t" style="left:808.4px;top:1249.5px;font-size:22px;line-height:22px;color:#323b49;transform:scaleX(0.9568);transform-origin:0 0;">Shared_Pre Rules</div>
<div class="t" style="left:1054px;top:993.5px;font-size:22px;line-height:22px;color:#323b49;transform:scaleX(0.8773);transform-origin:0 0;">INTERNET</div>
<div class="t" style="left:1053px;top:1121.5px;font-size:22px;line-height:22px;color:#323b49;transform:scaleX(0.9760);transform-origin:0 0;">Any</div>
<div class="t" style="left:1053px;top:1249.5px;font-size:22px;line-height:22px;color:#323b49;transform:scaleX(0.9760);transform-origin:0 0;">Any</div>
<div class="t" style="left:1253.4px;top:993.5px;font-size:22px;line-height:22px;color:#323b49;transform:scaleX(0.9760);transform-origin:0 0;">Any</div>
<div class="t" style="left:1253.4px;top:1121.5px;font-size:22px;line-height:22px;color:#323b49;letter-spacing:-0.24px;">any</div>
<div class="t" style="left:1254px;top:1249.5px;font-size:22px;line-height:22px;color:#323b49;letter-spacing:-0.31px;">107.23.31.186</div>
<div class="t" style="left:1254px;top:1281.0px;font-size:22px;line-height:22px;color:#323b49;letter-spacing:-0.31px;">107.23.46.130</div>
<div class="t" style="left:1534px;top:993.5px;font-size:22px;line-height:22px;color:#323b49;transform:scaleX(0.8565);transform-origin:0 0;">PROD_FE</div>
<div class="t" style="left:1532px;top:1121.5px;font-size:22px;line-height:22px;color:#323b49;transform:scaleX(0.9760);transform-origin:0 0;">Any</div>
<div class="t" style="left:1532px;top:1249.5px;font-size:22px;line-height:22px;color:#323b49;transform:scaleX(0.9760);transform-origin:0 0;">Any</div>
<div class="t" style="left:1733.75px;top:993.5px;font-size:22px;line-height:22px;color:#323b49;transform:scaleX(0.9760);transform-origin:0 0;">Any</div>
<div class="t" style="left:1734.7px;top:1121.5px;font-size:22px;line-height:22px;color:#323b49;transform:scaleX(0.7359);transform-origin:0 0;">::1</div>
<div class="t" style="left:1740.7px;top:1154px;font-size:22px;line-height:22px;color:#323b49;transform:scaleX(0.8974);transform-origin:0 0;">DNS_SINKHOLE</div>
<div class="t" style="left:1740.7px;top:1185.5px;font-size:22px;line-height:22px;color:#323b49;letter-spacing:0.04px;">panw-high</div>
<div class="t" style="left:1733.75px;top:1249.5px;font-size:22px;line-height:22px;color:#323b49;transform:scaleX(0.9760);transform-origin:0 0;">Any</div>
<div class="t" style="left:2027.5px;top:993.5px;font-size:22px;line-height:22px;color:#323b49;transform:scaleX(0.9760);transform-origin:0 0;">Any</div>
<div class="t" style="left:2027.5px;top:1121.5px;font-size:22px;line-height:22px;color:#323b49;transform:scaleX(0.9760);transform-origin:0 0;">Any</div>
<div class="t" style="left:2028.5px;top:1249.5px;font-size:22px;line-height:22px;color:#323b49;letter-spacing:0.12px;">known-</div>
<div class="t" style="left:2028.5px;top:1281.0px;font-size:22px;line-height:22px;color:#323b49;letter-spacing:0.07px;">user</div>
<div class="t" style="left:2170.7px;top:993.5px;font-size:22px;line-height:22px;color:#323b49;letter-spacing:0.10px;">icmp</div>
<div class="t" style="left:2170.7px;top:1025.5px;font-size:22px;line-height:22px;color:#323b49;letter-spacing:0.80px;">ping</div>
<div class="t" style="left:2170.7px;top:1057.5px;font-size:22px;line-height:22px;color:#323b49;letter-spacing:0.48px;">traceroute</div>
<div class="t" style="left:2170.7px;top:1121.5px;font-size:22px;line-height:22px;color:#323b49;transform:scaleX(0.9760);transform-origin:0 0;">Any</div>
<div class="t" style="left:2170.9px;top:1249.5px;font-size:22px;line-height:22px;color:#323b49;letter-spacing:0.77px;">ftp</div>
<div class="t" style="left:2170.9px;top:1281.0px;font-size:22px;line-height:22px;color:#323b49;transform:scaleX(0.9201);transform-origin:0 0;">ssh</div>
<div style="position:absolute;left:2395.5px;top:925px;width:38.5px;height:47px;overflow:hidden;"><div class="t" style="left:20px;top:14px;font-size:20px;line-height:20px;color:#3d4654;">Se</div></div>
<div style="position:absolute;left:2395.5px;top:972px;width:38.5px;height:340px;overflow:hidden;">
<div class="t" style="left:22px;top:21px;font-size:12px;line-height:12px;color:#4a5361;font-weight:700;letter-spacing:-0.3px;">TCP</div>
<div style="position:absolute;left:23px;top:35px;width:20px;height:4px;border:1.2px solid #4a5361;border-top:none;border-radius:0 0 2px 2px;"></div>
<svg style="position:absolute;left:21.5px;top:149px" width="25" height="24"><g fill="none" stroke="#4a5361"><rect x="1.2" y="1.6" width="22.4" height="21.4" rx="1.2" stroke-width="2.2"/><path d="M1.2 2.4 H23.6" stroke-width="3"/><rect x="5.6" y="6.2" width="5.2" height="5.2" stroke-width="1.6"/><rect x="13.6" y="6.2" width="5.2" height="5.2" stroke-width="1.6"/><rect x="5.6" y="14" width="5.2" height="5.2" stroke-width="1.6"/><rect x="13.6" y="14" width="5.2" height="5.2" stroke-width="1.6"/></g></svg>
<svg style="position:absolute;left:21.5px;top:278px" width="25" height="24"><g fill="none" stroke="#4a5361"><rect x="1.2" y="1.6" width="22.4" height="21.4" rx="1.2" stroke-width="2.2"/><path d="M1.2 2.4 H23.6" stroke-width="3"/><rect x="5.6" y="6.2" width="5.2" height="5.2" stroke-width="1.6"/><rect x="13.6" y="6.2" width="5.2" height="5.2" stroke-width="1.6"/><rect x="5.6" y="14" width="5.2" height="5.2" stroke-width="1.6"/><rect x="13.6" y="14" width="5.2" height="5.2" stroke-width="1.6"/></g></svg>
<div class="t" style="left:22px;top:313px;font-size:12px;line-height:12px;color:#4a5361;font-weight:700;letter-spacing:-0.3px;">TCP</div>
<div style="position:absolute;left:23px;top:327px;width:20px;height:4px;border:1.2px solid #4a5361;border-top:none;border-radius:0 0 2px 2px;"></div>
</div>
<svg style="position:absolute;left:2461.3px;top:992.0999999999999px;" width="12" height="30.4" viewBox="0 0 12 30.4"><circle cx="6" cy="6.0" r="3.2" fill="#2e6aa5"/><circle cx="6" cy="15.2" r="3.2" fill="#2e6aa5"/><circle cx="6" cy="24.4" r="3.2" fill="#2e6aa5"/></svg>
<div style="position:absolute;left:2443px;top:1113.5px;width:49px;height:51.5px;background:#fdfdfe;border-radius:9px;box-shadow:0 0 3px rgba(0,0,0,0.04);"></div>
<svg style="position:absolute;left:2463.5px;top:1124.4px;" width="12" height="30" viewBox="0 0 12 30"><circle cx="6" cy="6" r="3.2" fill="#2e6aa5"/><circle cx="6" cy="15" r="3.2" fill="#2e6aa5"/><circle cx="6" cy="24" r="3.2" fill="#2e6aa5"/></svg>
<svg style="position:absolute;left:2461.3px;top:1248.2px;" width="12" height="30.6" viewBox="0 0 12 30.6"><circle cx="6" cy="6.0" r="3.2" fill="#2e6aa5"/><circle cx="6" cy="15.3" r="3.2" fill="#2e6aa5"/><circle cx="6" cy="24.6" r="3.2" fill="#2e6aa5"/></svg>
<svg style="position:absolute;left:2316px;top:1122px;" width="118" height="32" viewBox="0 0 118 32"><path d="M0.5 0.4 H101.7 L116.6 15.7 L101.7 31 H0.5 Z" fill="#f0a03c"/></svg>
<div class="t" style="left:2328.4px;top:1131px;font-size:16px;line-height:16px;color:#fff;font-weight:700;letter-spacing:-0.1px;">Click Here</div>
<svg style="position:absolute;left:0;top:1285px" width="30" height="25"><path d="M0 6 Q4 21 18.5 25 H0 Z" fill="#7e8590"/></svg>
<svg style="position:absolute;left:2530px;top:1250px" width="30" height="60"><path d="M30 4 C30 40 22 55 7 60 H30 Z" fill="#5d6163"/></svg>
</body></html>
